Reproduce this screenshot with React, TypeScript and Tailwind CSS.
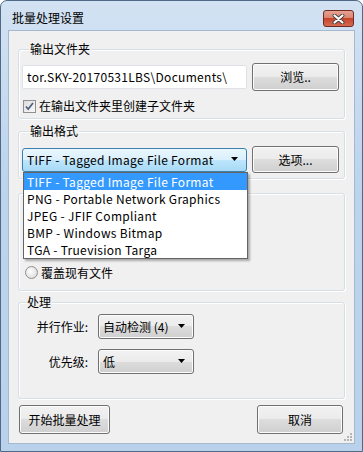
import React from 'react'

const font = { fontFamily: '"Noto Sans CJK SC", "Noto Sans", sans-serif' }

const btn = "flex items-center justify-center rounded-[3px] border border-[#707070] bg-[linear-gradient(#f2f2f2,#ebebeb_50%,#dddddd_50%,#cfcfcf)] shadow-[inset_0_0_0_1px_#fcfcfc] text-[12px] text-black"

function Arrow() {
  return (
    <svg width="8" height="5" viewBox="0 0 8 5" className="shrink-0">
      <path d="M0 0h7L3.5 4z" fill="#000" />
    </svg>
  )
}

function Group({ title, className, children }: { title?: string; className?: string; children?: React.ReactNode }) {
  return (
    <div className={"ml-[9px] w-[327px] rounded-[3px] border border-[#d5dfe5] shadow-[inset_1px_1px_0_#fff,1px_1px_0_#fff] " + (className ?? "")}>
      {title && <div className="-mt-[8px] ml-[7px] w-fit px-[1px] bg-[#f0f0f0] text-[12px] leading-[14px] text-black">{title}</div>}
      {children}
    </div>
  )
}

function Radio({ label }: { label: string }) {
  return (
    <div className="flex items-center gap-[3px] h-[17px]">
      <span className="w-[13px] h-[13px] rounded-full border border-[#8e8f8f] bg-[radial-gradient(circle_at_40%_40%,#fefefe,#d4d4d4)]" />
      <span className="text-[12px] leading-[14px] text-black">{label}</span>
    </div>
  )
}

const formats = [
  "TIFF - Tagged Image File Format",
  "PNG - Portable Network Graphics",
  "JPEG - JFIF Compliant",
  "BMP - Windows Bitmap",
  "TGA - Truevision Targa",
]

export default function App() {
  return (
    <div className="w-[363px] h-[452px] flex flex-col rounded-t-[7px] border border-[#4f6a86] bg-[linear-gradient(#d2e2f3,#bdd4ec_40%,#b9d1ea)]" style={font}>
      {/* title bar */}
      <div className="h-[29px] flex items-start justify-between pl-[11px] pr-[8px]">
        <span className="text-[12px] leading-[14px] text-black mt-[10px]">批量处理设置</span>
        <div className="w-[31px] h-[17px] mt-[9px] rounded-[3px] border border-[#6e2a23] bg-[linear-gradient(#e8a191,#d98672_45%,#c7442b_50%,#d46a52)] flex items-center justify-center">
          <svg width="13" height="10" viewBox="0 0 13 10">
            <path d="M2.5 1.5L10.5 8.5M10.5 1.5L2.5 8.5" stroke="#3c3c3c" strokeWidth="3.8" strokeLinecap="round" />
            <path d="M2.5 1.5L10.5 8.5M10.5 1.5L2.5 8.5" stroke="#fff" strokeWidth="2.2" strokeLinecap="round" />
          </svg>
        </div>
      </div>

      {/* client area */}
      <div className="relative mx-[7px] mb-[7px] flex-1 bg-[#f0f0f0] border border-[#a4b9d0] flex flex-col">
        <Group title="输出文件夹" className="mt-[18px] h-[70px] pl-[3px]">
          <div className="flex items-center gap-[5px] mt-[7px]">
            <div className="w-[225px] h-[24px] bg-white border border-[#dfe3e8] rounded-[2px] flex items-center pl-[4px] text-[12px] tracking-[0.3px] text-black overflow-hidden whitespace-nowrap">
              tor.SKY-20170531LBS\Documents\
            </div>
            <div className={btn + " w-[87px] h-[28px]"}>浏览..</div>
          </div>
          <div className="flex items-center gap-[3px] mt-[8px] h-[14px] pl-[1px]">
            <span className="w-[13px] h-[13px] border border-[#8e8f8f] bg-[linear-gradient(135deg,#dcdcdc,#fafafa)] flex items-center justify-center">
              <svg width="9" height="9" viewBox="0 0 9 9">
                <path d="M1 4.5l2.2 2.6L8 1" stroke="#4d6185" strokeWidth="1.7" fill="none" />
              </svg>
            </span>
            <span className="text-[12px] leading-[14px] text-black">在输出文件夹里创建子文件夹</span>
          </div>
        </Group>

        <Group title="输出格式" className="mt-[12px] h-[48px] pl-[3px]">
          <div className="flex items-center gap-[5px] mt-[8px]">
            <div className="w-[225px] h-[24px] rounded-[3px] border border-[#3c7fb1] bg-[linear-gradient(#eaf6fd,#d9f0fc_50%,#bee6fd_50%,#a7d9f5)] flex items-center justify-between pl-[4px] pr-[7px] text-[12px] text-black">
              <span className="tracking-[0.3px]">TIFF - Tagged Image File Format</span>
              <Arrow />
            </div>
            <div className={btn + " w-[87px] h-[27px]"}>选项...</div>
          </div>
        </Group>

        {/* group whose upper part is covered by the open list */}
        <Group className="mt-[14px] h-[98px] pl-[6px] pt-[70px]">
          <Radio label="覆盖现有文件" />
        </Group>

        <Group title="处理" className="mt-[11px] h-[97px]">
          <div className="grid grid-cols-[69px_96px] gap-x-[10px] gap-y-[10px] mt-[5px] items-center">
            <span className="text-right text-[12px] text-black">并行作业:</span>
            <div className={btn + " h-[25px] !justify-between pl-[4px] pr-[7px]"}>
              <span>自动检测 (4)</span>
              <Arrow />
            </div>
            <span className="text-right text-[12px] text-black">优先级:</span>
            <div className={btn + " h-[25px] !justify-between pl-[4px] pr-[7px]"}>
              <span>低</span>
              <Arrow />
            </div>
          </div>
        </Group>

        <div className="flex justify-between mt-[6px] pl-[10px] pr-[11px]">
          <div className={btn + " w-[91px] h-[29px]"}>开始批量处理</div>
          <div className={btn + " w-[86px] h-[29px]"}>取消</div>
        </div>

        {/* size grip */}
        <svg className="absolute right-[1px] bottom-[1px]" width="10" height="10" viewBox="0 0 10 10">
          <g fill="#b4b4b4">
            <rect x="7" y="1" width="2" height="2" />
            <rect x="4" y="4" width="2" height="2" />
            <rect x="7" y="4" width="2" height="2" />
            <rect x="1" y="7" width="2" height="2" />
            <rect x="4" y="7" width="2" height="2" />
            <rect x="7" y="7" width="2" height="2" />
          </g>
        </svg>

        {/* open dropdown list */}
        <div className="absolute left-[14px] top-[141px] w-[225px] h-[87px] bg-white border border-[#646464] shadow-[2px_2px_2px_rgba(0,0,0,0.3)] text-[12px] leading-[17px] tracking-[0.3px] text-black">
          {formats.map((f, i) => (
            <div key={f} className={"pl-[3px] " + (i === 0 ? "bg-[#3399ff] text-white" : "")}>{f}</div>
          ))}
        </div>
      </div>
    </div>
  )
}
